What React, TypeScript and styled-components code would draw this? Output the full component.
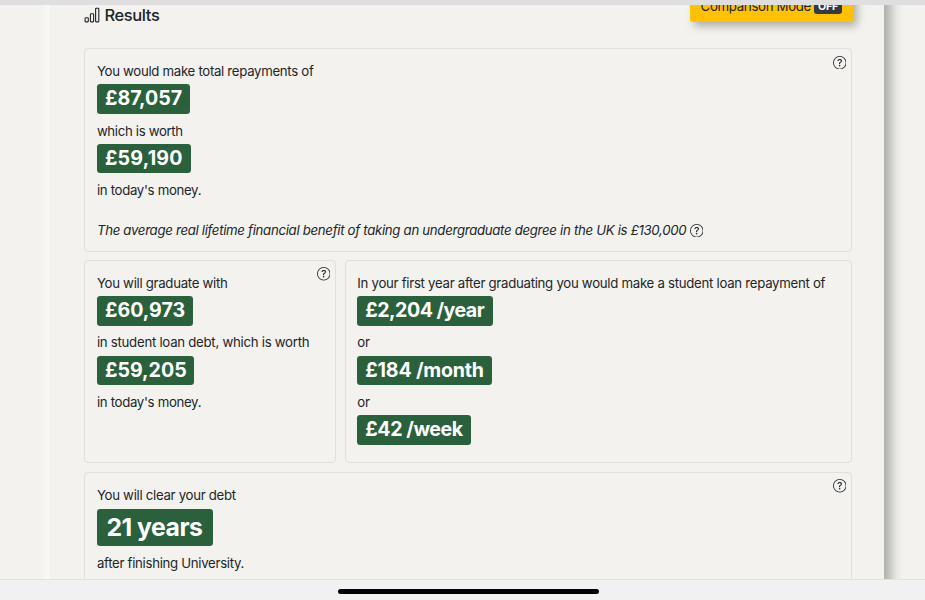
import React from "react";
import styled, { createGlobalStyle } from "styled-components";

const GlobalStyle = createGlobalStyle`
  * { box-sizing: border-box; }
  body {
    margin: 0;
    overflow: hidden;
    background: #f3f2ee;
    color: #212529;
    font-family: Inter, "Liberation Sans", sans-serif;
    font-size: 13.23px;
    line-height: 19.85px;
  }
`;

const Screen = styled.div`
  display: flex;
  flex-direction: column;
  width: 925px;
  height: 600px;
  overflow: hidden;
`;

const TopBar = styled.div`
  flex: 0 0 4.5px;
  background: #dfdfdf;
`;

const Viewport = styled.main`
  flex: 1;
  min-height: 0;
  overflow: hidden;
`;

const Panel = styled.section`
  width: 834px;
  height: 620px;
  margin: -20px 0 0 50.4px;
  padding: 20px 32px 0 34px;
  background: #f3f2ee;
  box-shadow: -7px -7px 5px #f7f7f5, 7px 7px 11px #aaaba6;
`;

const Header = styled.header`
  display: flex;
  justify-content: space-between;
  height: 43.5px;
`;

const Title = styled.h1`
  display: flex;
  align-items: center;
  gap: 4px;
  height: 21px;
  margin: 0;
  font-size: 16.5px;
  font-weight: 500;
  letter-spacing: -0.38px;
  line-height: 21px;
`;

const CompareButton = styled.button`
  display: flex;
  align-items: center;
  gap: 3px;
  width: 162.6px;
  height: 31px;
  margin: -14px -0.4px 0 0;
  padding: 1px 10px 0 10.4px;
  border: 0;
  border-radius: 3px;
  background: #ffc107;
  color: #212529;
  box-shadow: 4px 4px 8px #aaaba5, -4px -4px 8px #f8f7f5;
  font: inherit;
  letter-spacing: -0.33px;
  white-space: nowrap;
`;

const Toggle = styled.span`
  height: 16px;
  margin-top: -1px;
  padding: 0 4px;
  border-radius: 3px;
  background: #343a40;
  color: #fff;
  font-size: 10.6px;
  font-weight: 700;
  letter-spacing: -0.1px;
  line-height: 18px;
`;

const Grid = styled.div`
  display: grid;
  grid-template-columns: 252px 507.6px;
  grid-template-rows: 203.5px 203.3px 203px;
  gap: 8.4px;
`;

const CardBox = styled.article<{ $wide?: boolean }>`
  position: relative;
  grid-column: ${(p) => (p.$wide ? "1 / -1" : "auto")};
  padding: 13px 11.5px 11px;
  border: 1px solid #e0dfdb;
  border-radius: 4px;
`;

const Line = styled.p<{ $space?: number }>`
  margin: 0;
  letter-spacing: ${(p) => p.$space ?? -0.3}px;
  white-space: nowrap;
`;

const Note = styled(Line)`
  display: flex;
  align-items: center;
  gap: 3.5px;
  margin-top: 19.85px;
  font-style: italic;
`;

const Badge = styled.strong<{ $width: number; $large?: boolean; $space?: number }>`
  display: flex;
  align-items: center;
  width: ${(p) => p.$width}px;
  height: ${(p) => (p.$large ? 37.2 : 29.8)}px;
  margin: ${(p) => (p.$large ? "3.7px 0 7.5px" : "2.3px 0 7.6px")};
  padding-left: ${(p) => (p.$large ? 9.5 : 8)}px;
  border-radius: 3.3px;
  background: #2b603c;
  color: #fff;
  font-size: ${(p) => (p.$large ? 24.8 : 19.6)}px;
  font-weight: 700;
  letter-spacing: ${(p) => p.$space ?? 0}px;
  line-height: 1;
  white-space: nowrap;
`;

const HelpCorner = styled.span`
  position: absolute;
  top: 6.5px;
  right: 5px;
  display: flex;
`;

const BottomBar = styled.footer`
  display: flex;
  flex: 0 0 21px;
  justify-content: center;
  padding: 9px 0 0 11px;
  border-top: 1px solid #e3e2de;
  background: #f1f1f1;
`;

const HomeIndicator = styled.div`
  width: 261px;
  height: 5px;
  border-radius: 3px;
  background: #000;
`;

const HelpIcon = () => (
  <svg width="13.5" height="13.5" viewBox="0 0 16 16" fill="currentColor">
    <path d="M8 15A7 7 0 1 1 8 1a7 7 0 0 1 0 14m0 1A8 8 0 1 0 8 0a8 8 0 0 0 0 16" />
    <path d="M5.255 5.786a.237.237 0 0 0 .241.247h.825c.138 0 .248-.113.266-.25.09-.656.54-1.134 1.342-1.134.686 0 1.314.343 1.314 1.168 0 .635-.374.927-.965 1.371-.673.489-1.206 1.06-1.168 1.987l.003.217a.25.25 0 0 0 .25.246h.811a.25.25 0 0 0 .25-.25v-.105c0-.718.273-.927 1.01-1.486.609-.463 1.244-.977 1.244-2.056 0-1.511-1.276-2.241-2.673-2.241-1.267 0-2.655.59-2.75 2.286m1.557 5.763c0 .533.425.927 1.01.927.609 0 1.028-.394 1.028-.927 0-.552-.42-.94-1.029-.94-.584 0-1.009.388-1.009.94" />
  </svg>
);

const ChartIcon = () => (
  <svg width="16" height="16" viewBox="0 0 16 16" fill="none" stroke="currentColor" strokeWidth="1.1">
    <rect x="1.1" y="10.8" width="3.2" height="4.1" rx="0.6" />
    <rect x="6.4" y="6.8" width="3.2" height="8.1" rx="0.6" />
    <rect x="11.6" y="1.3" width="3.2" height="13.6" rx="0.6" />
  </svg>
);

type Item =
  | { text: string; space?: number }
  | { badge: string; width: number; large?: boolean; space?: number };

const Card = ({
  items,
  wide,
  help,
  children,
}: {
  items: Item[];
  wide?: boolean;
  help?: boolean;
  children?: React.ReactNode;
}) => (
  <CardBox $wide={wide}>
    {items.map((item, i) =>
      "badge" in item ? (
        <Badge key={i} $width={item.width} $large={item.large} $space={item.space}>{item.badge}</Badge>
      ) : (
        <Line key={i} $space={item.space}>{item.text}</Line>
      )
    )}
    {children}
    {help && <HelpCorner><HelpIcon /></HelpCorner>}
  </CardBox>
);

export default function App() {
  return (
    <Screen>
      <GlobalStyle />
      <TopBar />
      <Viewport>
        <Panel>
          <Header>
            <Title><ChartIcon />Results</Title>
            <CompareButton>Comparison Mode <Toggle>OFF</Toggle></CompareButton>
          </Header>
          <Grid>
            <Card
              wide
              help
              items={[
                { text: "You would make total repayments of", space: -0.31 },
                { badge: "£87,057", width: 93.5 },
                { text: "which is worth", space: -0.34 },
                { badge: "£59,190", width: 94.5, space: 0.2 },
                { text: "in today's money.", space: -0.32 },
              ]}
            >
              <Note $space={-0.305}>
                The average real lifetime financial benefit of taking an undergraduate degree in the UK is £130,000
                <HelpIcon />
              </Note>
            </Card>
            <Card
              help
              items={[
                { text: "You will graduate with" },
                { badge: "£60,973", width: 96.5 },
                { text: "in student loan debt, which is worth", space: -0.27 },
                { badge: "£59,205", width: 97.5 },
                { text: "in today's money.", space: -0.32 },
              ]}
            />
            <Card
              items={[
                { text: "In your first year after graduating you would make a student loan repayment of", space: -0.285 },
                { badge: "£2,204 /year", width: 135.5, space: -0.52 },
                { text: "or" },
                { badge: "£184 /month", width: 135, space: -0.2 },
                { text: "or" },
                { badge: "£42 /week", width: 114, space: -0.45 },
              ]}
            />
            <Card
              wide
              help
              items={[
                { text: "You will clear your debt" },
                { badge: "21 years", width: 116.5, large: true, space: -0.5 },
                { text: "after finishing University." },
              ]}
            />
          </Grid>
        </Panel>
      </Viewport>
      <BottomBar><HomeIndicator /></BottomBar>
    </Screen>
  );
}
